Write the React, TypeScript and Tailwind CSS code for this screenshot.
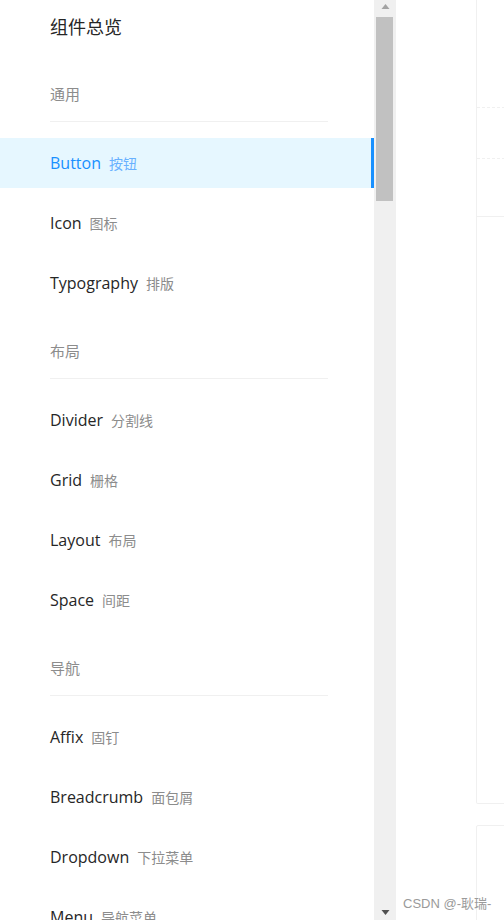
import React from 'react';

interface MenuItem {
  name: string;
  label: string;
  active?: boolean;
}

interface MenuGroup {
  title: string;
  items: MenuItem[];
}

const groups: MenuGroup[] = [
  {
    title: '通用',
    items: [
      { name: 'Button', label: '按钮', active: true },
      { name: 'Icon', label: '图标' },
      { name: 'Typography', label: '排版' },
    ],
  },
  {
    title: '布局',
    items: [
      { name: 'Divider', label: '分割线' },
      { name: 'Grid', label: '栅格' },
      { name: 'Layout', label: '布局' },
      { name: 'Space', label: '间距' },
    ],
  },
  {
    title: '导航',
    items: [
      { name: 'Affix', label: '固钉' },
      { name: 'Breadcrumb', label: '面包屑' },
      { name: 'Dropdown', label: '下拉菜单' },
      { name: 'Menu', label: '导航菜单' },
    ],
  },
];

export default function App() {
  return (
    <div className="relative flex h-[920px] w-[504px] overflow-hidden bg-white font-['Open_Sans','Noto_Sans_CJK_SC',sans-serif]">
      {/* Side menu */}
      <nav className="w-[374px] shrink-0 overflow-hidden">
        <div className="h-[61px] pt-[16px] pl-[50px] text-[18px] leading-[22px] text-[#262626]">组件总览</div>

        {groups.map((group) => (
          <div key={group.title}>
            <div className="ml-[50px] mr-[46px] mb-[16px] border-b border-[#f0f0f0] pt-[22px] pb-[16px] text-[15px] leading-[22px] text-[#8c8c8c]">
              {group.title}
            </div>
            {group.items.map((item) => (
              <div
                key={item.name}
                className={`mb-[10px] flex h-[50px] items-center pl-[50px] ${
                  item.active ? 'border-r-[3px] border-[#1890ff] bg-[#e6f7ff]' : ''
                }`}
              >
                <span className={`text-[16px] ${item.active ? 'text-[#1890ff]' : 'text-[#262626]'}`}>{item.name}</span>
                <span className={`ml-[8px] text-[14px] ${item.active ? 'text-[#69b1ff]' : 'text-[#8c8c8c]'}`}>
                  {item.label}
                </span>
              </div>
            ))}
          </div>
        ))}
      </nav>

      {/* Scrollbar */}
      <div className="flex w-[22px] shrink-0 flex-col items-center bg-[#f0f0f0]">
        <svg width="9" height="17" viewBox="0 0 9 17" className="shrink-0">
          <path d="M4.5 4 L8.5 9 L0.5 9 Z" fill="#a3a3a3" />
        </svg>
        <div className="mr-[1px] h-[184px] w-[17px] bg-[#c1c1c1]" />
        <div className="flex-1" />
        <svg width="9" height="17" viewBox="0 0 9 17" className="shrink-0">
          <path d="M0.5 7 L8.5 7 L4.5 12 Z" fill="#505050" />
        </svg>
      </div>

      {/* Content */}
      <div className="flex-1 overflow-hidden pl-[80px]">
        <div className="h-[804px] w-[300px] rounded-b-[2px] border border-t-0 border-[#f0f0f0]">
          <div className="h-[108px] border-b border-dashed border-[#f0f0f0]" />
          <div className="h-[51px] border-b border-dashed border-[#f0f0f0]" />
          <div className="h-[58px] border-b border-[#f0f0f0]" />
        </div>
        <div className="mt-[21px] h-[200px] w-[300px] rounded-t-[2px] border border-[#f0f0f0]" />
      </div>

      <div className="absolute left-[403px] top-[894px] font-['Liberation_Sans','Noto_Sans_CJK_SC',sans-serif] text-[13px] text-[#9a9a9a]">
        CSDN @-耿瑞-
      </div>
    </div>
  );
}
